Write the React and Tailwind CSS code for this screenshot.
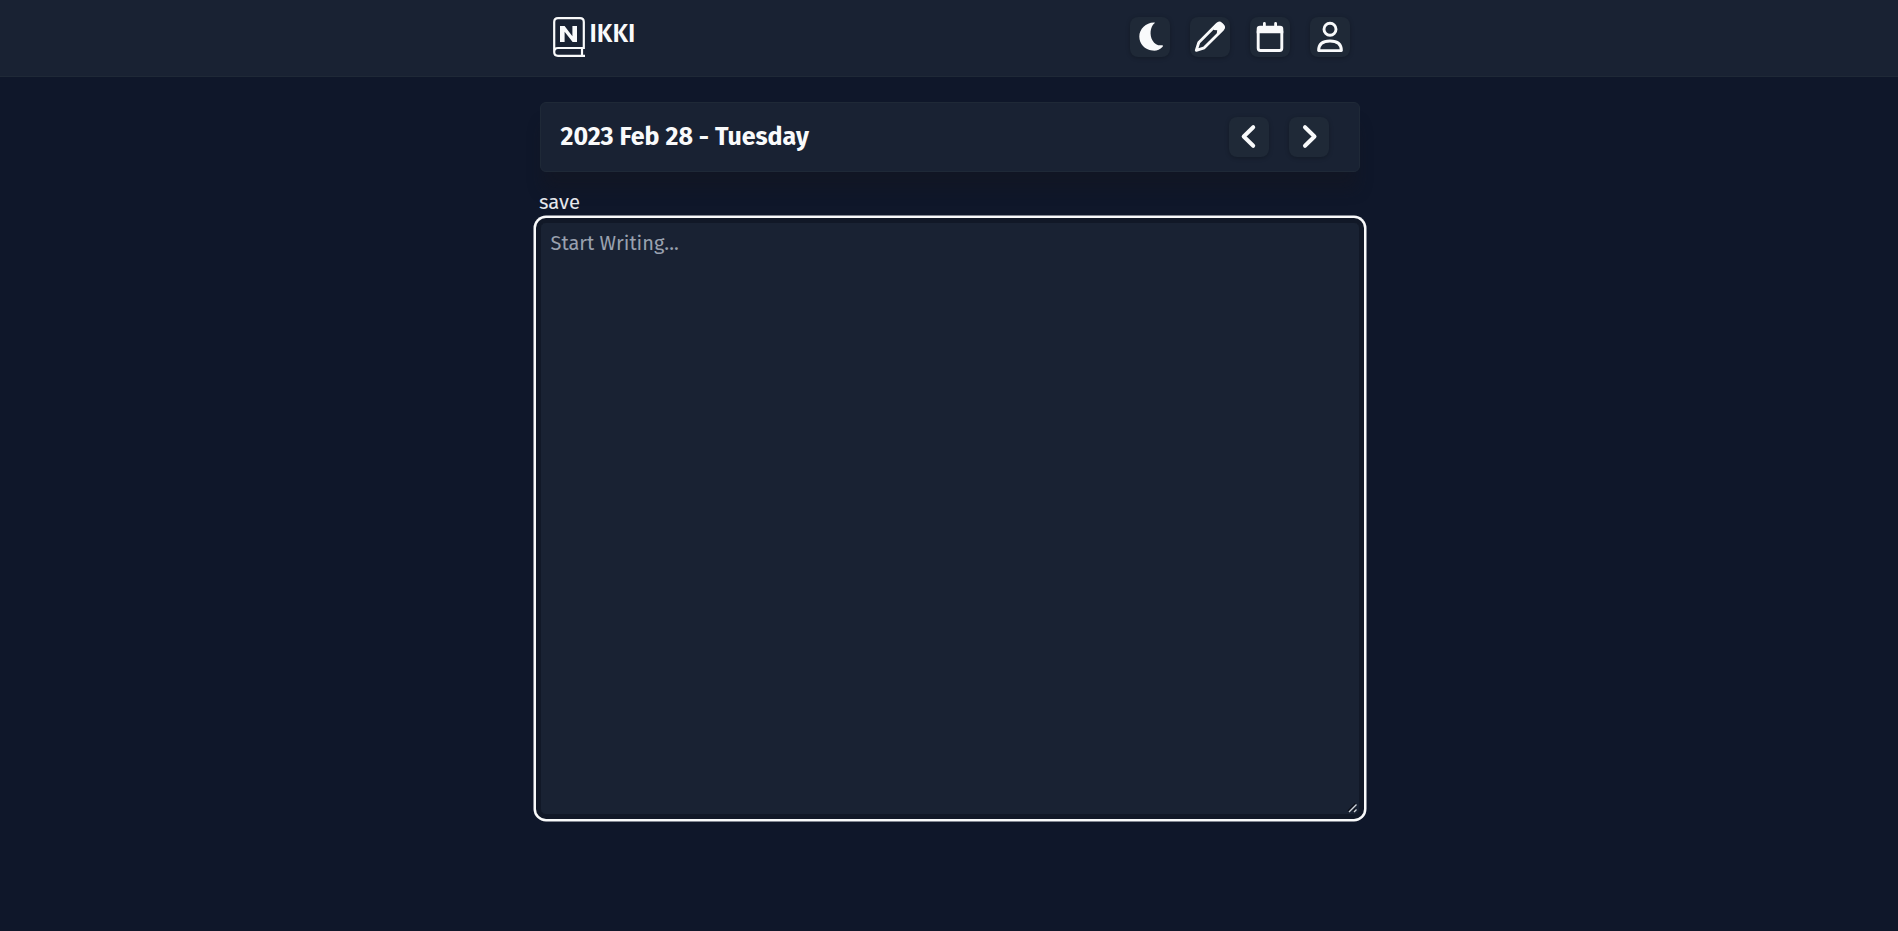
const btn =
  "flex h-10 w-10 items-center justify-center rounded-lg bg-[#1f2937] shadow-[0_1px_4px_rgba(0,0,0,0.25)]";

function IconButton({ label, children }) {
  return (
    <button aria-label={label} className={btn}>
      <svg width="40" height="40" viewBox="0 0 40 40" fill="none" stroke="#f9fafb" strokeLinecap="round" strokeLinejoin="round">
        {children}
      </svg>
    </button>
  );
}

function Logo() {
  return (
    <svg width="32" height="40" viewBox="0 0 32 40" fill="none" stroke="#f9fafb" strokeWidth="2.2">
      <path d="M1.2 35V5Q1.2 1.2 5 1.2H27Q30.8 1.2 30.8 5V31H5Q1.2 31 1.2 35Q1.2 38.8 5 38.8H32M29 31V39" />
      <path d="M7 25V9H11.6L19.4 19.3V9H24V25H19.6L11.6 14.7V25Z" fill="#f9fafb" stroke="none" />
    </svg>
  );
}

export default function App() {
  return (
    <div className="min-h-[931px] bg-[#0f172a] font-['Fira_Sans','Noto_Sans',sans-serif] text-gray-50">
      <header className="h-[77px] border-b border-[#1f2937] bg-[#192233] pt-[17px]">
        <div className="mx-auto flex w-[820px] translate-x-px items-start justify-between pr-[10px] pl-[13px]">
          <div className="flex">
            <Logo />
            <span className="ml-[4.5px] pt-px text-[25px] leading-8 font-semibold">IKKI</span>
          </div>
          <nav className="flex gap-5">
            <IconButton label="Dark mode">
              <path fill="#f9fafb" stroke="none" d="M24.5 6.2C20 10 19.5 18 22.4 23.2C25 28 29 28.8 32.2 28.2C33.1 28.1 33.2 29 32.6 29.7C29.8 32.9 26.2 34.1 22.3 33.6C14.8 32.7 9.3 27 9.3 19.5C9.3 12 16 5.6 23.8 5.5C24.9 5.4 25.1 5.7 24.5 6.2Z" />
            </IconButton>
            <IconButton label="Write">
              <path strokeWidth="2.8" d="M6.3 33.3L8.8 25.5L27.2 7.1Q29.2 5.1 31.3 7L32.6 8.3Q34.6 10.4 32.6 12.5L14.2 30.8Z" />
              <path fill="#f9fafb" stroke="none" d="M23.8 10L26.8 7Q29.2 4.2 32 6.6L33.2 7.8Q35.8 10.5 33.2 13.2L29 17.4L26.8 16.4L27.2 13.2L23.6 13Z" />
            </IconButton>
            <IconButton label="Calendar">
              <path strokeWidth="2.9" d="M8.2 14V31.3Q8.2 33.5 10.4 33.5H29.6Q31.8 33.5 31.8 31.3V14" />
              <path fill="#f9fafb" stroke="none" d="M6.7 16.2V12Q6.7 8.7 10 8.7H13V6.4Q13 5 14.4 5T15.8 6.4V8.7H24.2V6.4Q24.2 5 25.6 5T27 6.4V8.7H30Q33.3 8.7 33.3 12V16.2Z" />
            </IconButton>
            <IconButton label="Profile">
              <circle cx="20" cy="12.2" r="6" strokeWidth="2.9" />
              <path strokeWidth="2.9" d="M8.6 33.6C8.6 27 13 24 20 24S31.4 27 31.4 33.6Z" />
            </IconButton>
          </nav>
        </div>
      </header>

      <main className="mx-auto w-[820px] translate-x-px pt-[25px]">
        <section className="flex h-[70px] items-center justify-between rounded-md border border-[#1f2937] bg-[#192233] pr-[30px] pl-[19.5px] shadow-[0_20px_15px_-3px_rgba(22,22,30,0.4)]">
          <h1 className="text-[25px] leading-8 font-bold">2023 Feb 28 - Tuesday</h1>
          <div className="flex gap-5">
            <IconButton label="Previous day">
              <path strokeWidth="4" d="M24.2 10.2L14.7 19.5L24.2 28.8" />
            </IconButton>
            <IconButton label="Next day">
              <path strokeWidth="4" d="M16 10.2L25.5 19.5L16 28.8" />
            </IconButton>
          </div>
        </section>
        <div className="-ml-px mt-[14px] h-9 text-[20.3px] leading-8 text-gray-200">save</div>
        <div className="relative">
          <textarea
            placeholder="Start Writing..."
            className="block h-[593px] w-[820px] resize-none rounded-md border border-[#111827] bg-[#192233] px-[9.5px] py-[5px] text-[20px] leading-[30px] shadow-[0_0_0_4px_#111827,0_0_0_6.5px_#f9fafb] outline-none placeholder:text-gray-400"
          />
          <svg className="pointer-events-none absolute right-[2px] bottom-[2px]" width="11" height="11" viewBox="0 0 11 11" fill="none">
            <path d="M1 9L8.5 1.5M6 9L8.5 6.5" stroke="#0b0f19" strokeWidth="1.5" />
            <path d="M2 10L9.5 2.5M7 10L9.5 7.5" stroke="#d1d5db" strokeWidth="1.4" />
          </svg>
        </div>
      </main>
    </div>
  );
}
